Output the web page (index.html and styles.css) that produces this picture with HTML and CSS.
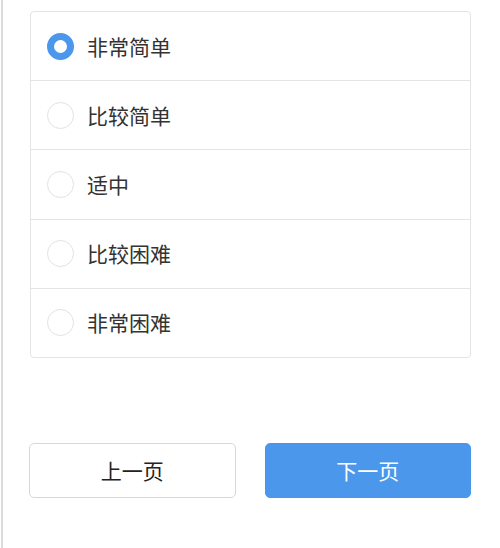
FILE: index.html
```html
<!DOCTYPE html>
<html lang="zh-CN">
<head>
  <meta charset="UTF-8" />
  <meta name="viewport" content="width=device-width, initial-scale=1.0" />
  <title>问卷</title>
  <link rel="stylesheet" href="styles.css">
</head>
<body>
  <div class="page">
    <div class="options">
      <label class="option">
        <input type="radio" name="level" checked>
        <span class="radio"></span>
        <span class="label">非常简单</span>
      </label>
      <label class="option">
        <input type="radio" name="level">
        <span class="radio"></span>
        <span class="label">比较简单</span>
      </label>
      <label class="option">
        <input type="radio" name="level">
        <span class="radio"></span>
        <span class="label">适中</span>
      </label>
      <label class="option">
        <input type="radio" name="level">
        <span class="radio"></span>
        <span class="label">比较困难</span>
      </label>
      <label class="option">
        <input type="radio" name="level">
        <span class="radio"></span>
        <span class="label">非常困难</span>
      </label>
    </div>

    <div class="pager">
      <button class="btn prev">上一页</button>
      <button class="btn next">下一页</button>
    </div>
  </div>
</body>
</html>
```

FILE: styles.css
```css
:root {
  --blue: #4b97ec;
  --line: #e4e4e4;
  --text: #333;
}

html, body {
  margin: 0;
  height: 100%;
  background: #fff;
}

body {
  font-family: "Noto Sans CJK SC", "Noto Sans", sans-serif;
  color: var(--text);
}

.page {
  min-height: 100%;
  box-sizing: border-box;
  border-left: 2px solid #dcdcdc;
  margin-left: 1px;
  padding: 11px 29px 0 27px;
}

.options {
  border: 1px solid var(--line);
  border-radius: 4px;
  background: #fff;
}

.option {
  display: flex;
  align-items: center;
  height: 68.2px;
  padding-left: 16px;
  border-bottom: 1px solid var(--line);
  cursor: pointer;
}

.option:last-child {
  border-bottom: none;
}

.option input {
  display: none;
}

.radio {
  width: 27px;
  height: 27px;
  box-sizing: border-box;
  border: 1px solid #e2e2e2;
  border-radius: 50%;
  flex-shrink: 0;
}

.option input:checked + .radio {
  border: 7px solid var(--blue);
}

.label {
  margin-left: 13px;
  font-size: 21px;
  line-height: 1;
}

.pager {
  display: flex;
  gap: 29px;
  margin-top: 85px;
  margin-left: -1px;
}

.btn {
  flex: 1;
  height: 55px;
  font-family: inherit;
  font-size: 21px;
  border-radius: 5px;
  cursor: pointer;
}

.prev {
  background: #fff;
  color: #222;
  border: 1px solid #d8d8d8;
}

.next {
  background: var(--blue);
  color: #fff;
  border: 1px solid var(--blue);
}
```
